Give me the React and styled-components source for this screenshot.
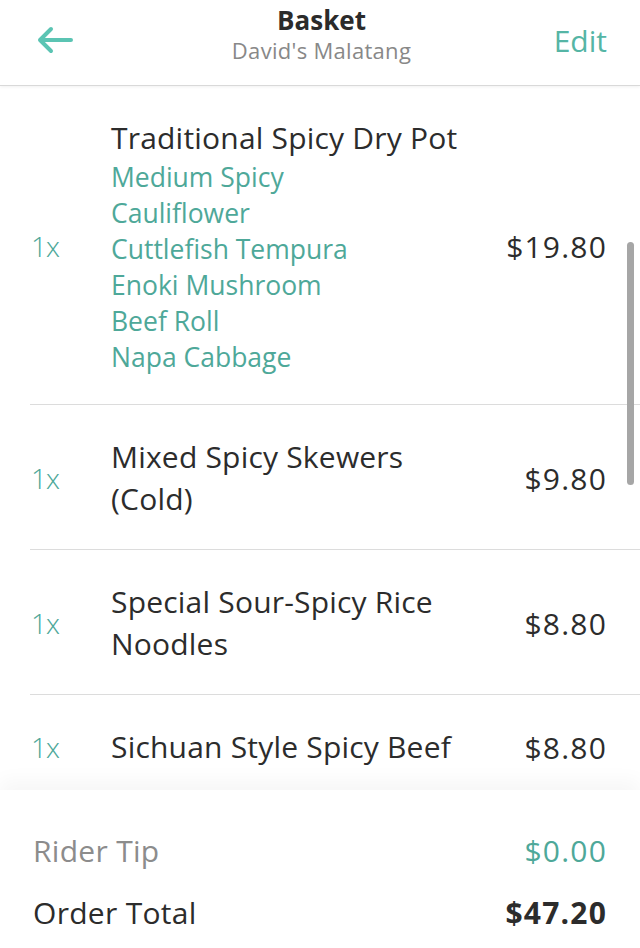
import React from 'react'
import styled, { createGlobalStyle } from 'styled-components'

const items = [
  {
    qty: 1,
    name: ['Traditional Spicy Dry Pot'],
    options: ['Medium Spicy', 'Cauliflower', 'Cuttlefish Tempura', 'Enoki Mushroom', 'Beef Roll', 'Napa Cabbage'],
    price: '$19.80',
  },
  { qty: 1, name: ['Mixed Spicy Skewers', '(Cold)'], options: [], price: '$9.80' },
  { qty: 1, name: ['Special Sour-Spicy Rice', 'Noodles'], options: [], price: '$8.80' },
  { qty: 1, name: ['Sichuan Style Spicy Beef'], options: [], price: '$8.80' },
]

const App = () => {
  return (
    <>
      <GlobalStyle />
      <Screen>
        <Header>
          <BackButton aria-label="Back">
            <svg width="38" height="28" viewBox="0 0 38 28" fill="none">
              <path d="M35 14H4M15 3L4 14l11 11" stroke="#5bc4b3" strokeWidth="4" strokeLinecap="round" strokeLinejoin="round" />
            </svg>
          </BackButton>
          <TitleBlock>
            <Title>Basket</Title>
            <Subtitle>David's Malatang</Subtitle>
          </TitleBlock>
          <EditButton>Edit</EditButton>
        </Header>

        <List>
          {items.map((item, i) => (
            <Row key={i}>
              <Qty>{item.qty}x</Qty>
              <Details>
                {item.name.map((line) => (
                  <Name key={line}>{line}</Name>
                ))}
                {item.options.map((opt) => (
                  <Option key={opt}>{opt}</Option>
                ))}
              </Details>
              <Price>{item.price}</Price>
            </Row>
          ))}
          <ScrollThumb />
        </List>

        <Footer>
          <SummaryRow>
            <SummaryLabel>Rider Tip</SummaryLabel>
            <SummaryValue $teal>$0.00</SummaryValue>
          </SummaryRow>
          <SummaryRow>
            <SummaryLabel $dark>Order Total</SummaryLabel>
            <SummaryValue $bold>$47.20</SummaryValue>
          </SummaryRow>
        </Footer>
      </Screen>
    </>
  )
}

const GlobalStyle = createGlobalStyle`
  html, body {
    margin: 0;
    padding: 0;
    background: #fff;
  }
  body {
    font-family: "Open Sans", "Noto Sans", sans-serif;
    color: #2c2c2c;
  }
`

const Screen = styled.div`
  width: 640px;
  height: 948px;
  display: flex;
  flex-direction: column;
  overflow: hidden;
  background: #fff;
`

const Header = styled.div`
  flex: 0 0 86px;
  display: flex;
  align-items: center;
  justify-content: space-between;
  padding: 0 33px 0 36px;
  box-sizing: border-box;
  border-bottom: 1px solid #d9d9d9;
  box-shadow: 0 1px 3px rgba(0, 0, 0, 0.06);
  position: relative;
  z-index: 2;
  background: #fff;
`

const BackButton = styled.button`
  border: none;
  background: none;
  padding: 0;
  margin-top: -6px;
  width: 70px;
  display: flex;
  align-items: center;
`

const TitleBlock = styled.div`
  display: flex;
  flex-direction: column;
  align-items: center;
  margin-top: -16px;
`

const Title = styled.div`
  font-weight: 700;
  font-size: 26px;
  line-height: 30px;
  color: #2b2b2b;
`

const Subtitle = styled.div`
  font-size: 22px;
  line-height: 30px;
  color: #888;
  letter-spacing: 0.3px;
`

const EditButton = styled.button`
  border: none;
  background: none;
  padding: 0;
  width: 70px;
  text-align: right;
  font-family: inherit;
  font-size: 30px;
  color: #55b5a5;
  margin-top: -4px;
`

const List = styled.div`
  flex: 1;
  overflow: hidden;
  position: relative;
`

const Row = styled.div`
  display: flex;
  align-items: center;
  margin-left: 30px;
  padding: 31px 33px 29px 0;
  border-bottom: 1px solid #dcdcdc;
`

const Qty = styled.div`
  width: 80px;
  flex: 0 0 80px;
  padding-left: 1px;
  font-size: 28px;
  font-weight: 300;
  letter-spacing: -1px;
  color: #4ea899;
`

const Details = styled.div`
  flex: 1;
  display: flex;
  flex-direction: column;
  white-space: nowrap;
`

const Name = styled.div`
  font-size: 30px;
  line-height: 42px;
  letter-spacing: 0.2px;
  color: #2c2c2c;
`

const Option = styled.div`
  font-size: 26.5px;
  line-height: 36px;
  color: #4ea899;
  &:first-of-type {
    margin-top: 3px;
  }
`

const Price = styled.div`
  font-size: 30px;
  letter-spacing: 1.2px;
  color: #2c2c2c;
  text-align: right;
  margin-left: 10px;
`

const ScrollThumb = styled.div`
  position: absolute;
  top: 156px;
  right: 6px;
  width: 7px;
  height: 243px;
  border-radius: 4px;
  background: #a6a6a6;
`

const Footer = styled.div`
  flex: 0 0 158px;
  box-sizing: border-box;
  padding: 39px 33px 0 33px;
  display: flex;
  flex-direction: column;
  gap: 20px;
  background: #fff;
  box-shadow: 0 -10px 18px rgba(0, 0, 0, 0.035);
  position: relative;
  z-index: 2;
`

const SummaryRow = styled.div`
  display: flex;
  justify-content: space-between;
  align-items: center;
  height: 42px;
`

const SummaryLabel = styled.div`
  font-size: 30px;
  letter-spacing: 0.3px;
  color: ${(p) => (p.$dark ? '#2c2c2c' : '#8c8c8c')};
`

const SummaryValue = styled.div`
  font-size: 30px;
  letter-spacing: 1.2px;
  font-weight: ${(p) => (p.$bold ? 700 : 400)};
  color: ${(p) => (p.$teal ? '#4ea899' : '#2c2c2c')};
`

export default App
